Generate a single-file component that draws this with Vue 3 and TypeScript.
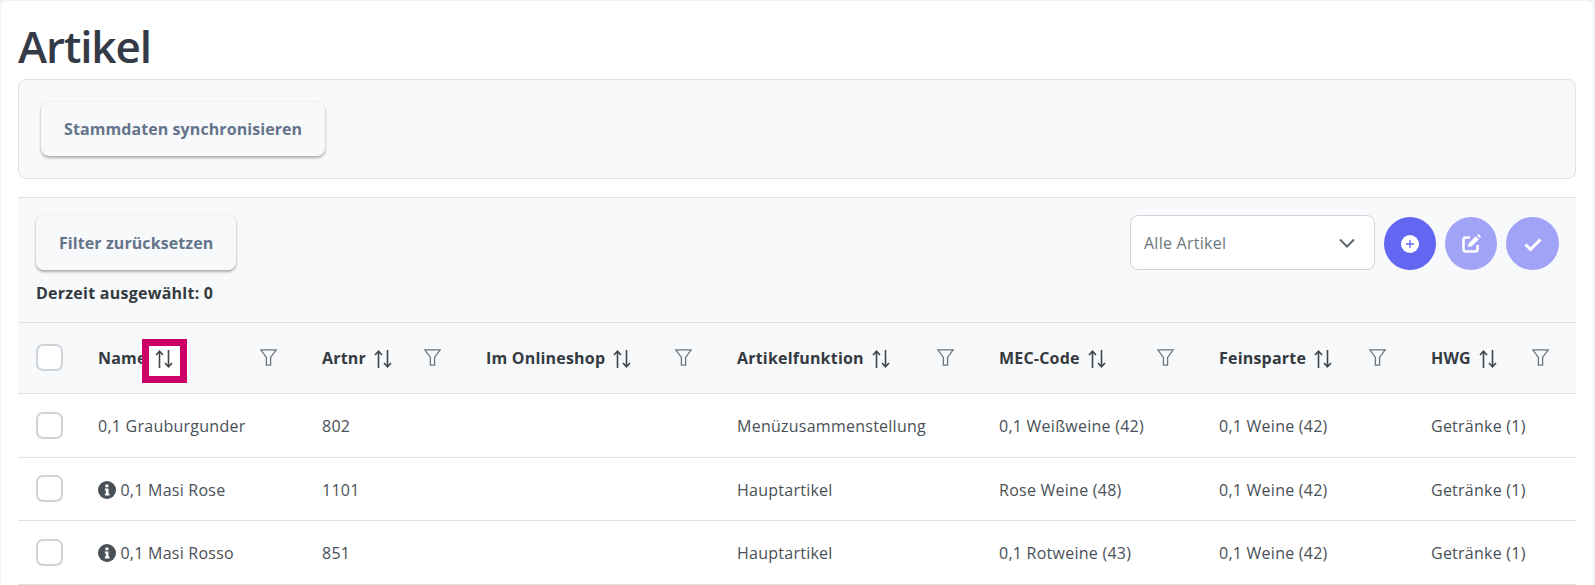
<template>
  <div class="page">
    <main class="card">
      <h1 class="title">Artikel</h1>

      <section class="sync-panel">
        <button class="soft-btn">Stammdaten synchronisieren</button>
      </section>

      <section class="toolbar">
        <div class="toolbar-left">
          <button class="soft-btn">Filter zurücksetzen</button>
          <div class="selected">Derzeit ausgewählt: 0</div>
        </div>
        <div class="toolbar-right">
          <div class="select">
            <span>Alle Artikel</span>
            <svg class="chevron" viewBox="0 0 16 10" fill="none" stroke="currentColor" stroke-width="2">
              <path d="M1 1.5l7 7 7-7" />
            </svg>
          </div>
          <button class="round-btn">
            <svg viewBox="0 0 18 18" class="round-icon">
              <circle cx="9" cy="9" r="9" fill="#fff" />
              <path d="M9 5v8M5 9h8" stroke="#6366f1" stroke-width="1.3" />
            </svg>
          </button>
          <button class="round-btn faded">
            <svg viewBox="0 0 19 19" class="round-icon edit">
              <path d="M8 3.500H3.800A2.300 2.300 0 0 0 1.500 5.800v9.400a2.300 2.300 0 0 0 2.300 2.300h9.400a2.300 2.300 0 0 0 2.300-2.300V11" fill="none" stroke="#fff" stroke-width="2.600" />
              <path d="M6.500 9.500 13.800 2.300l3 3-7.300 7.200-3.600.6zM15 1.200l.7-.6a1.200 1.200 0 0 1 1.500 0l1.300 1.300a1.200 1.200 0 0 1 0 1.500l-.7.800z" fill="#fff" />
            </svg>
          </button>
          <button class="round-btn faded last">
            <svg viewBox="0 0 18 18" class="round-icon">
              <path d="M1.500 9.500l5 4.800 10-9.800" fill="none" stroke="#fff" stroke-width="3" />
            </svg>
          </button>
        </div>
      </section>

      <table class="grid">
        <colgroup>
          <col v-for="w in colWidths" :key="w" :style="{ width: w + 'px' }" />
        </colgroup>
        <thead>
          <tr>
            <th><span class="check"></span></th>
            <th v-for="(c, i) in columns" :key="c">
              <div class="head-cell">
                <span class="head-label">
                  {{ c }}
                  <svg class="sort" viewBox="0 0 18 18" fill="none" stroke="currentColor" stroke-width="1.600">
                    <path d="M4.500 18V1.200M1 5l3.500-3.800L8 5M13.500 0v16.800M10 13l3.500 3.800L17 13" />
                  </svg>
                  <span v-if="i === 0" class="marker"></span>
                </span>
                <svg class="funnel" viewBox="0 0 17 17" fill="none" stroke="currentColor" stroke-width="1.300">
                  <path d="M.8.800h15.400L10.600 8.400v7.800H6.400V8.400z" />
                </svg>
              </div>
            </th>
          </tr>
        </thead>
        <tbody>
          <tr v-for="r in rows" :key="r.nr">
            <td><span class="check"></span></td>
            <td>
              <svg v-if="r.info" class="info" viewBox="0 0 18 18">
                <circle cx="9" cy="9" r="9" fill="#495057" />
                <path d="M7.400 3.600h3v2.600h-3zM6.900 7.500h3.600v5h1v1.900H6.900v-1.900h1v-3.100h-1z" fill="#fff" />
              </svg>
              {{ r.name }}
            </td>
            <td>{{ r.nr }}</td>
            <td></td>
            <td>{{ r.fn }}</td>
            <td>{{ r.mec }}</td>
            <td>{{ r.fein }}</td>
            <td>{{ r.hwg }}</td>
          </tr>
        </tbody>
      </table>
    </main>
  </div>
</template>

<script setup lang="ts">
interface Row {
  name: string
  info: boolean
  nr: string
  fn: string
  mec: string
  fein: string
  hwg: string
}

const colWidths = [62, 224, 164, 251, 262, 220, 212, 163]
const columns = ['Name', 'Artnr', 'Im Onlineshop', 'Artikelfunktion', 'MEC-Code', 'Feinsparte', 'HWG']

const rows: Row[] = [
  { name: '0,1 Grauburgunder', info: false, nr: '802', fn: 'Menüzusammenstellung', mec: '0,1 Weißweine (42)', fein: '0,1 Weine (42)', hwg: 'Getränke (1)' },
  { name: '0,1 Masi Rose', info: true, nr: '1101', fn: 'Hauptartikel', mec: 'Rose Weine (48)', fein: '0,1 Weine (42)', hwg: 'Getränke (1)' },
  { name: '0,1 Masi Rosso', info: true, nr: '851', fn: 'Hauptartikel', mec: '0,1 Rotweine (43)', fein: '0,1 Weine (42)', hwg: 'Getränke (1)' }
]
</script>

<style>
html,
body {
  margin: 0;
  background: #eff3f8;
  overflow: hidden;
}
</style>

<style scoped>
.page {
  height: 585px;
  padding: 1px 2px 0 1px;
  box-sizing: border-box;
  font-family: "Open Sans", "Noto Sans", sans-serif;
  color: #495057;
}

.card {
  background: #fff;
  border-radius: 6px 6px 0 0;
  padding: 0 17px;
  height: 100%;
  overflow: hidden;
}

.title {
  margin: 0;
  height: 78px;
  line-height: 90px;
  font-size: 44px;
  font-weight: 600;
  letter-spacing: -1.1px;
  color: #343a46;
}

.sync-panel {
  background: #f8f9fa;
  border: 1px solid #dee2e6;
  border-radius: 8px;
  height: 100px;
  padding: 22px;
  box-sizing: border-box;
}

.soft-btn {
  display: block;
  height: 54px;
  padding: 0 23px;
  border: none;
  border-radius: 8px;
  background: #f8f9fa;
  color: #64748b;
  font: 700 16px "Open Sans", "Noto Sans", sans-serif;
  letter-spacing: 0.08px;
  box-shadow: 0 2px 3px rgba(0, 0, 0, 0.3), 0 0 2px rgba(0, 0, 0, 0.08);
}

.toolbar {
  margin-top: 18px;
  height: 126px;
  box-sizing: border-box;
  background: #f8f9fa;
  border-top: 1px solid #dee2e6;
  border-bottom: 1px solid #dee2e6;
  padding: 17px 18px 0;
  display: flex;
  justify-content: space-between;
  align-items: flex-start;
}

.toolbar .soft-btn {
  height: 55px;
}

.selected {
  margin-top: 12px;
  font-size: 16px;
  font-weight: 700;
  letter-spacing: 0.25px;
  color: #343a40;
}

.toolbar-right {
  display: flex;
  align-items: flex-end;
  gap: 9px;
}

.select {
  width: 245px;
  height: 55px;
  box-sizing: border-box;
  border: 1px solid #ced4da;
  border-radius: 8px;
  background: #fff;
  padding: 0 19px 0 13px;
  display: flex;
  align-items: center;
  justify-content: space-between;
  font-size: 16px;
  letter-spacing: 0.25px;
  color: #6c757d;
}

.chevron {
  width: 16px;
  height: 10px;
  color: #5f666d;
}

.round-btn {
  width: 52px;
  height: 53px;
  border: none;
  border-radius: 50%;
  background: #6366f1;
  padding: 0;
  display: flex;
  align-items: center;
  justify-content: center;
}

.round-btn.faded {
  background: #a1a3f7;
}

.round-btn.last {
  width: 53px;
  margin-right: -1px;
}

.round-icon {
  width: 18px;
  height: 18px;
}

.round-icon.edit {
  width: 19px;
  height: 19px;
}

.grid {
  width: 100%;
  table-layout: fixed;
  border-collapse: collapse;
  font-size: 16px;
}

th,
td {
  padding: 0 18px;
  text-align: left;
  border-bottom: 1px solid #dee2e6;
  box-sizing: border-box;
  white-space: nowrap;
}

th {
  height: 70px;
  background: #f8f9fa;
  color: #343a40;
  font-weight: 700;
  letter-spacing: 0.2px;
  padding-right: 27px;
}

td {
  height: 63.600px;
  color: #495057;
  letter-spacing: 0.25px;
  padding-top: 2px;
}

td:first-child {
  padding-top: 0;
}

tbody tr:first-child td {
  height: 64px;
}

th:first-child,
td:first-child {
  padding-right: 0;
}

.check {
  display: block;
  width: 27px;
  height: 27px;
  box-sizing: border-box;
  border: 2px solid #ced4da;
  border-radius: 7px;
  background: #fff;
}

.head-cell {
  display: flex;
  align-items: center;
  justify-content: space-between;
}

.head-label {
  position: relative;
  display: flex;
  align-items: center;
  gap: 8px;
}

.sort {
  width: 18px;
  height: 18px;
  color: #3f454c;
  position: relative;
  z-index: 1;
  top: 1px;
}

.marker {
  position: absolute;
  right: -14px;
  top: -8px;
  width: 45px;
  height: 44px;
  box-sizing: border-box;
  border: 7px solid #cc0066;
  background: #fff;
}

.funnel {
  width: 17px;
  height: 17px;
  color: #6c757d;
  flex: none;
}

.info {
  width: 18px;
  height: 18px;
  vertical-align: -3px;
}
</style>
